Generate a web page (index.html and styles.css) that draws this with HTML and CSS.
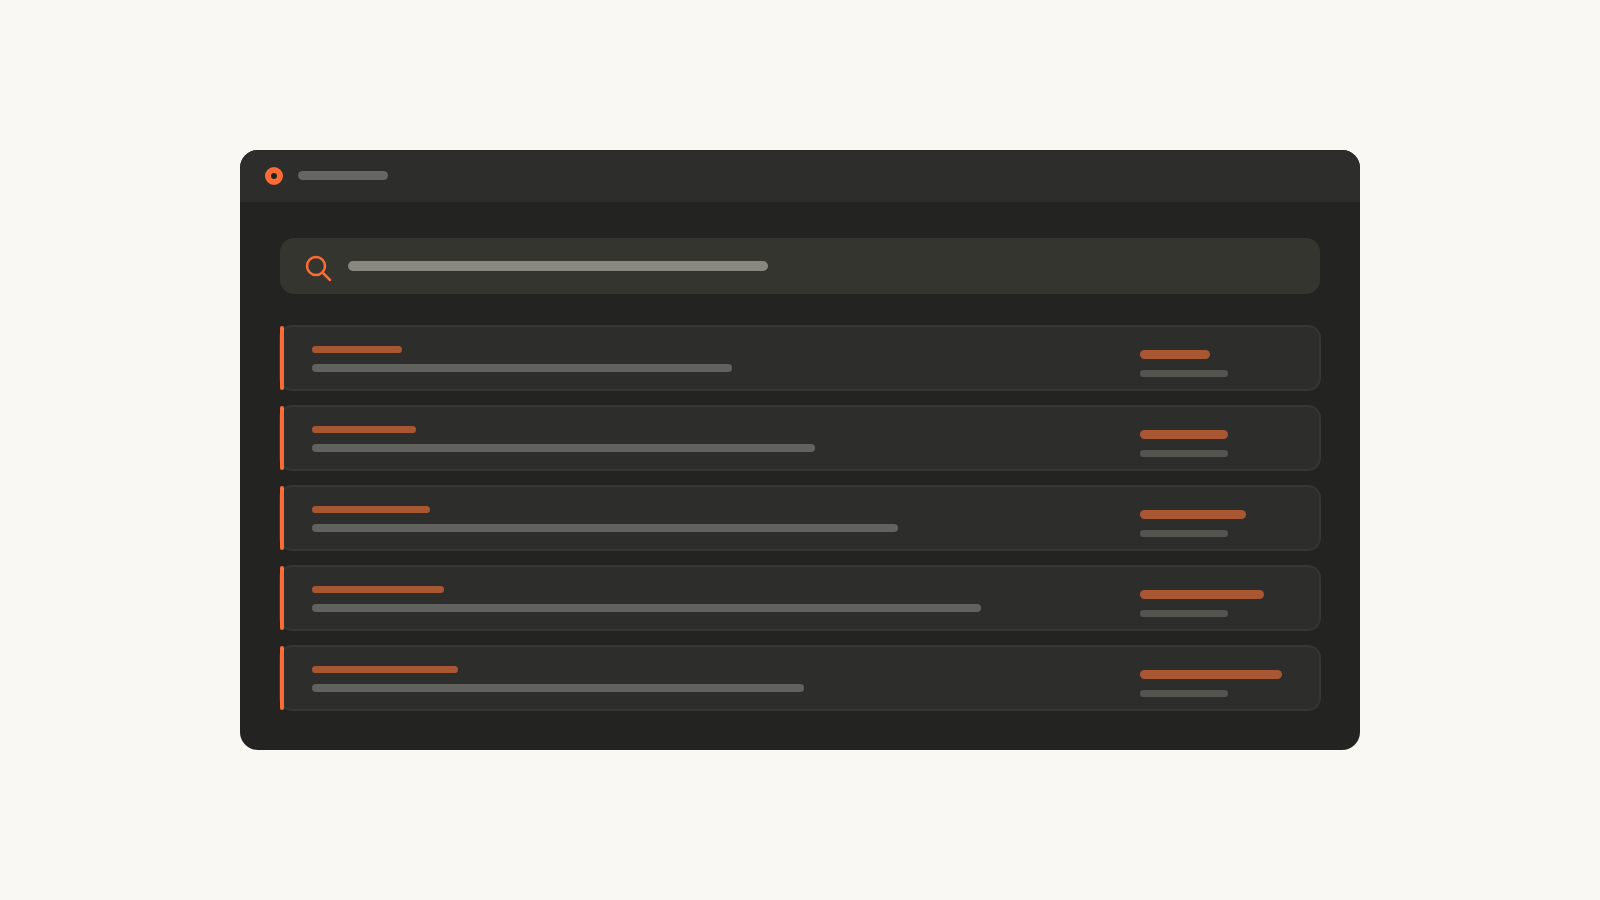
FILE: index.html
```html
<!DOCTYPE html>
<html lang="en">
<head>
    <meta charset="UTF-8">
    <title>Search results</title>
    <link rel="stylesheet" href="styles.css">
</head>
<body>

    <main class="panel">
        <header class="panel-header">
            <span class="logo-dot"></span>
            <span class="bar header-bar"></span>
        </header>

        <div class="panel-body">
            <div class="search-box">
                <svg class="search-icon" width="28" height="28" viewBox="0 0 28 28" fill="none" stroke="#ff6b35" stroke-width="2.5" stroke-linecap="round">
                    <circle cx="12" cy="12" r="9"/>
                    <path d="M19 19L26 26"/>
                </svg>
                <span class="bar search-bar"></span>
            </div>

            <div class="result-list">
                <div class="result-row">
                    <div class="result-main">
                        <span class="bar title-bar" style="width: 90px"></span>
                        <span class="bar desc-bar" style="width: 420px"></span>
                    </div>
                    <div class="result-side">
                        <span class="bar price-bar" style="width: 70px"></span>
                        <span class="bar meta-bar"></span>
                    </div>
                </div>
                <div class="result-row">
                    <div class="result-main">
                        <span class="bar title-bar" style="width: 104px"></span>
                        <span class="bar desc-bar" style="width: 503px"></span>
                    </div>
                    <div class="result-side">
                        <span class="bar price-bar" style="width: 88px"></span>
                        <span class="bar meta-bar"></span>
                    </div>
                </div>
                <div class="result-row">
                    <div class="result-main">
                        <span class="bar title-bar" style="width: 118px"></span>
                        <span class="bar desc-bar" style="width: 586px"></span>
                    </div>
                    <div class="result-side">
                        <span class="bar price-bar" style="width: 106px"></span>
                        <span class="bar meta-bar"></span>
                    </div>
                </div>
                <div class="result-row">
                    <div class="result-main">
                        <span class="bar title-bar" style="width: 132px"></span>
                        <span class="bar desc-bar" style="width: 669px"></span>
                    </div>
                    <div class="result-side">
                        <span class="bar price-bar" style="width: 124px"></span>
                        <span class="bar meta-bar"></span>
                    </div>
                </div>
                <div class="result-row">
                    <div class="result-main">
                        <span class="bar title-bar" style="width: 146px"></span>
                        <span class="bar desc-bar" style="width: 492px"></span>
                    </div>
                    <div class="result-side">
                        <span class="bar price-bar" style="width: 142px"></span>
                        <span class="bar meta-bar"></span>
                    </div>
                </div>
            </div>
        </div>
    </main>

</body>
</html>
```

FILE: styles.css
```css
:root {
    --page-color: #f9f8f3;
    --panel-color: #232321;
    --raised-color: #2d2d2b;
    --search-color: #353530;
    --border-color: #363634;
    --accent-color: #ff6b35;
    --accent-dim: #a95633;
}

body {
    margin: 0;
    min-height: 900px;
    display: flex;
    align-items: center;
    justify-content: center;
    background-color: var(--page-color);
}

.panel {
    width: 1120px;
    height: 600px;
    border-radius: 18px;
    overflow: hidden;
    background-color: var(--panel-color);
}

.panel-header {
    height: 52px;
    padding-left: 25px;
    display: flex;
    align-items: center;
    gap: 15px;
    background-color: var(--raised-color);
}

.logo-dot {
    width: 6px;
    height: 6px;
    border: 6px solid var(--accent-color);
    border-radius: 50%;
    background-color: var(--panel-color);
}

.bar {
    display: block;
    border-radius: 5px;
}

.header-bar {
    width: 90px;
    height: 9px;
    margin-top: -2px;
    background-color: #666663;
}

.panel-body {
    padding: 36px 40px 0;
}

.search-box {
    height: 56px;
    padding-left: 24px;
    display: flex;
    align-items: center;
    gap: 16px;
    border-radius: 14px;
    background-color: var(--search-color);
}

.search-icon {
    margin-top: 4px;
}

.search-bar {
    width: 420px;
    height: 10px;
    border-radius: 6px;
    background-color: #888880;
}

.result-list {
    margin-top: 32px;
    display: flex;
    flex-direction: column;
    gap: 16px;
}

.result-row {
    position: relative;
    height: 64px;
    box-sizing: border-box;
    display: flex;
    justify-content: space-between;
    border: 1px solid var(--border-color);
    border-radius: 12px;
    box-shadow: 0 0 0 1px var(--border-color);
    background-color: var(--raised-color);
}

.result-row::before {
    content: '';
    position: absolute;
    left: -1px;
    top: -1px;
    width: 4px;
    height: 64px;
    border-radius: 2px;
    background-color: var(--accent-color);
}

.result-main {
    padding: 19px 0 0 31px;
}

.result-side {
    width: 179px;
    padding-top: 23px;
}

.title-bar {
    height: 7px;
    background-color: var(--accent-dim);
}

.desc-bar {
    height: 8px;
    margin-top: 11px;
    background-color: #62625e;
}

.price-bar {
    height: 9px;
    background-color: var(--accent-dim);
}

.meta-bar {
    width: 88px;
    height: 7px;
    margin-top: 11px;
    background-color: #55554f;
}
```
